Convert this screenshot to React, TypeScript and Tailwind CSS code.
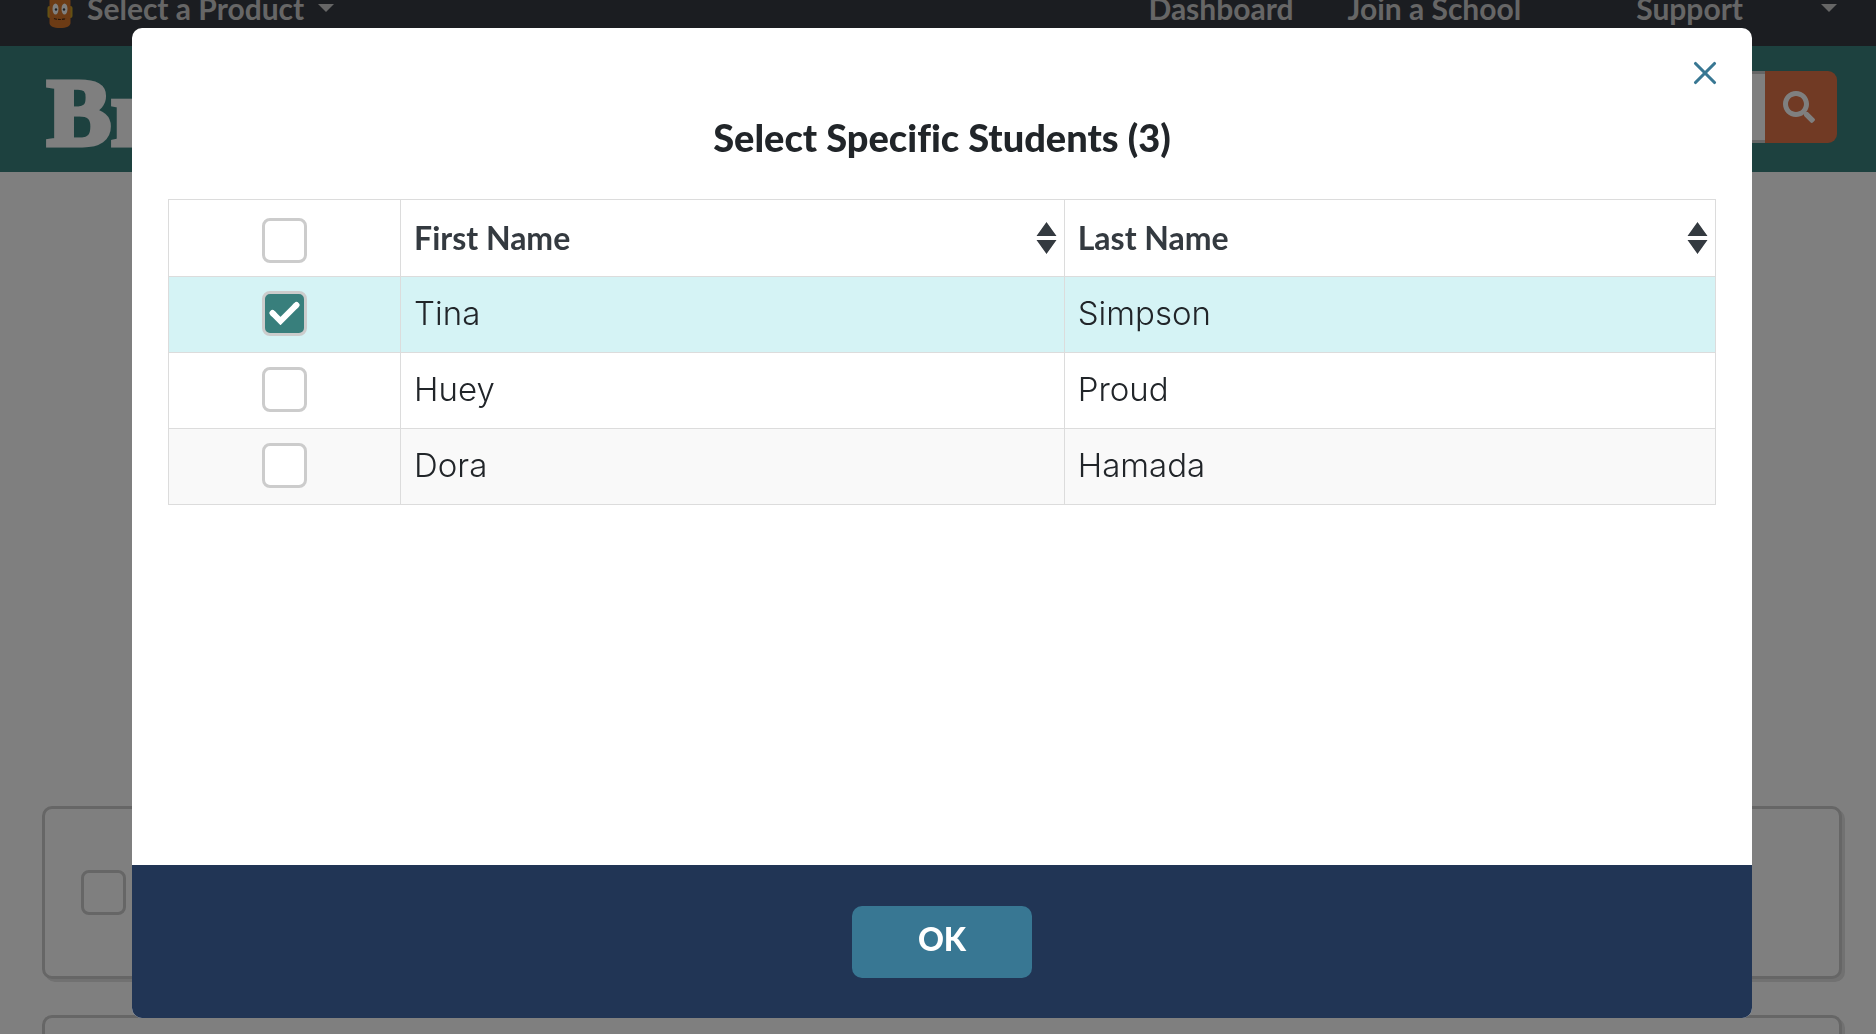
import { useState } from 'react';
import { X } from 'lucide-react';
import { FaSearch } from 'react-icons/fa';

type Student = {
  id: string;
  firstName: string;
  lastName: string;
};

const students: Student[] = [
  { id: 'tina', firstName: 'Tina', lastName: 'Simpson' },
  { id: 'huey', firstName: 'Huey', lastName: 'Proud' },
  { id: 'dora', firstName: 'Dora', lastName: 'Hamada' },
];

const checkboxClass =
  'block size-[45px] appearance-none rounded-lg border-3 border-[#ccc] bg-white checked:bg-[#387f7c]';

function MascotIcon() {
  return (
    <svg viewBox="0 0 26 40" className="h-10 w-[26px]" aria-hidden="true">
      <rect x="0.5" y="18" width="25" height="12" rx="2" fill="#c9a227" />
      <path
        d="M2.500 14c0-6 2-9 5-9h11c3 0 5 3 5 9v21c0 3-4 5-10.500 5S2.500 38 2.500 35z"
        fill="#d8772a"
      />
      <ellipse cx="8.500" cy="21" rx="3" ry="5.500" fill="#fff" />
      <ellipse cx="17.500" cy="21" rx="3" ry="5.500" fill="#fff" />
      <circle cx="9" cy="21.500" r="1.200" fill="#37424c" />
      <circle cx="17" cy="21.500" r="1.200" fill="#37424c" />
      <path d="M7 30.500q6 2 12 0" fill="none" stroke="#4a2a14" strokeWidth="1.200" strokeDasharray="3 1" />
    </svg>
  );
}

function Caret() {
  return (
    <svg viewBox="0 0 16 8" className="h-2 w-4" aria-hidden="true">
      <path d="M0 0h16L8 8z" fill="currentColor" />
    </svg>
  );
}

function SortIcon() {
  return (
    <svg viewBox="0 0 21 32" className="h-8 w-[21px]" aria-hidden="true">
      <path d="M10.500 0L20.500 14H.5zM.5 18h20l-10 14z" fill="#343a40" />
    </svg>
  );
}

function Checkbox({
  label,
  checked,
  onChange,
}: {
  label: string;
  checked: boolean;
  onChange: () => void;
}) {
  return (
    <label className="relative mx-auto block size-[45px]">
      <input
        type="checkbox"
        aria-label={label}
        checked={checked}
        onChange={onChange}
        className={checkboxClass}
      />
      {checked && (
        <svg
          viewBox="0 0 31 24"
          className="pointer-events-none absolute inset-0 m-auto h-6 w-[31px]"
          aria-hidden="true"
        >
          <path d="M3.500 12l8 8L27.500 4" fill="none" stroke="#fff" strokeWidth="6" strokeLinejoin="miter" />
          <path d="M3.500 12l1 1M26.500 5l1-1" stroke="#fff" strokeWidth="6" strokeLinecap="round" />
        </svg>
      )}
    </label>
  );
}

function SiteHeader() {
  return (
    <header>
      <div className="h-[46px] overflow-hidden bg-[#373a42]">
        <nav className="-mt-3 flex items-center justify-between pr-[39px] pl-[47px] text-[30px] leading-10 font-bold text-[#ccc]">
          <button type="button" className="flex items-center gap-[14px]">
            <MascotIcon />
            Select a Product
            <Caret />
          </button>
          <div className="flex items-center">
            <a href="#dashboard" className="mr-[54px]">Dashboard</a>
            <a href="#join" className="mr-[115px]">Join a School</a>
            <button type="button" className="flex items-center gap-[78px]">
              Support
              <Caret />
            </button>
          </div>
        </nav>
      </div>
      <div className="flex h-[126px] items-center justify-between bg-[#3a827f] pr-[39px] pl-[47px]">
        <a
          href="#home"
          className='pt-2 font-["Liberation_Serif",serif] text-[96px] leading-none font-bold text-white [-webkit-text-stroke:5px_#fff]'
        >
          Br
        </a>
        <form className="mb-1 flex h-[72px]" onSubmit={(event) => event.preventDefault()}>
          <input
            type="search"
            aria-label="Search"
            className="w-80 rounded-l-[9px] border-3 border-r-0 border-[#ccc] bg-white"
          />
          <button
            type="submit"
            aria-label="Submit search"
            className="flex w-[72px] items-center justify-center rounded-r-[9px] bg-[#e27448] pr-1 text-white"
          >
            <FaSearch className="size-8" />
          </button>
        </form>
      </div>
    </header>
  );
}

function QuestionCard({ label }: { label: string }) {
  return (
    <article className="flex h-[173px] items-center rounded-[10px] border-3 border-[#ccc] bg-white px-9 shadow-[3px_3px_0_#e2e2e2]">
      <input type="checkbox" aria-label={label} className={checkboxClass} />
    </article>
  );
}

export default function App() {
  const [selected, setSelected] = useState<string[]>(['tina']);

  const toggle = (id: string) =>
    setSelected((current) =>
      current.includes(id) ? current.filter((item) => item !== id) : [...current, id],
    );

  const allSelected = selected.length === students.length;

  return (
    <div className='relative h-screen overflow-hidden bg-white font-["Lato",sans-serif]'>
      <SiteHeader />
      <main className="flex flex-col gap-9 pt-[634px] pr-[34px] pl-[42px]">
        <QuestionCard label="Question 1" />
        <QuestionCard label="Question 2" />
      </main>

      <div className="fixed inset-0 flex bg-black/50 pt-7 pr-31 pb-4 pl-33">
        <section
          role="dialog"
          aria-modal="true"
          aria-labelledby="dialog-title"
          className="flex w-full flex-col overflow-hidden rounded-[10px] bg-white"
        >
          <div className="flex justify-end px-7 pt-[26px]">
            <button type="button" aria-label="Close" className="text-[#387793]">
              <X className="size-[38px]" strokeWidth={2} />
            </button>
          </div>

          <div className="flex-1 px-9">
            <h1
              id="dialog-title"
              className="mt-[25px] text-center text-[38px] leading-10 font-black text-[#212529] [font-variant-ligatures:none]"
            >
              Select Specific Students (3)
            </h1>

            <table className="mt-[42px] w-full table-fixed border-collapse">
              <colgroup>
                <col className="w-[15%]" />
                <col className="w-[42.9%]" />
                <col />
              </colgroup>
              <thead>
                <tr className="h-[77px] text-left text-[32px] leading-10 font-bold text-[#343a40]">
                  <th className="border border-[#dcdcdc] pt-1">
                    <Checkbox
                      label="Select all students"
                      checked={allSelected}
                      onChange={() => setSelected(allSelected ? [] : students.map(({ id }) => id))}
                    />
                  </th>
                  {['First Name', 'Last Name'].map((heading) => (
                    <th key={heading} className="border border-[#dcdcdc] pr-[7px] pl-[13px]">
                      <button type="button" className="flex w-full items-center justify-between">
                        {heading}
                        <SortIcon />
                      </button>
                    </th>
                  ))}
                </tr>
              </thead>
              <tbody className='font-["Inter",sans-serif] text-[33px] leading-10 font-light text-[#212529]'>
                {students.map((student) => {
                  const checked = selected.includes(student.id);
                  return (
                    <tr
                      key={student.id}
                      className={checked ? 'h-[76px] bg-[#d5f3f5]' : 'h-[76px] bg-white odd:bg-[#f9f9f9]'}
                    >
                      <td className="border border-[#dcdcdc] pb-[3px]">
                        <Checkbox
                          label={`Select ${student.firstName} ${student.lastName}`}
                          checked={checked}
                          onChange={() => toggle(student.id)}
                        />
                      </td>
                      <td className="border border-[#dcdcdc] px-[13px] pb-[3px]">{student.firstName}</td>
                      <td className="border border-[#dcdcdc] px-[13px] pb-[3px]">{student.lastName}</td>
                    </tr>
                  );
                })}
              </tbody>
            </table>
          </div>

          <footer className="flex justify-center bg-[#213555] pt-[41px] pb-10">
            <button
              type="button"
              className="h-[72px] w-[180px] rounded-[10px] bg-[#387793] pb-[6px] text-[32px] leading-10 font-black text-white"
            >
              OK
            </button>
          </footer>
        </section>
      </div>
    </div>
  );
}
